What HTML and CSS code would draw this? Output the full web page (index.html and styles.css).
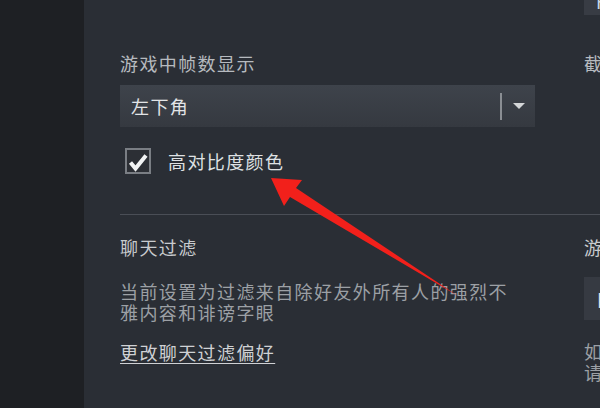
FILE: index.html
```html
<!DOCTYPE html>
<html lang="zh-CN">
<head>
  <meta charset="UTF-8">
  <title>游戏中设置</title>
  <link rel="stylesheet" href="styles.css">
</head>
<body>
  <div class="window">
    <aside class="sidebar"></aside>

    <main class="panel">
      <!-- 上半部分 -->
      <div class="row">
        <div class="col col-left">
          <div class="label">游戏中帧数显示</div>
          <div class="select">
            <span class="select-value">左下角</span>
            <span class="select-sep"></span>
            <span class="select-btn"><span class="select-arrow"></span></span>
          </div>
          <div class="check">
            <span class="check-box">
              <svg width="26" height="26" viewBox="0 0 26 26">
                <rect x="1" y="1" width="24" height="24" fill="#2c2f35" stroke="#7a7e84" stroke-width="2"/>
                <path d="M5.5 14.5 L10.5 20.5 L21 7.5" fill="none" stroke="#f2f3f4" stroke-width="4" stroke-linejoin="miter"/>
              </svg>
            </span>
            <span class="check-text">高对比度颜色</span>
          </div>
        </div>
        <div class="col col-right">
          <div class="stub"><span class="stub-text">F12</span></div>
          <div class="label label-top">截图快捷键</div>
        </div>
      </div>

      <div class="divider"></div>

      <!-- 下半部分 -->
      <div class="row">
        <div class="col col-left col-bottom">
          <div class="label label-bright">聊天过滤</div>
          <p class="desc">当前设置为过滤来自除好友外所有人的强烈不雅内容和诽谤字眼</p>
          <a class="link" href="#">更改聊天过滤偏好</a>
        </div>
        <div class="col col-right col-bottom">
          <div class="label label-bright">游戏内服务器浏览器：每分钟最大 Ping 数</div>
          <div class="input-box">自动（5000）</div>
          <p class="desc desc-right">如果您在浏览服务器时遇到连接问题，<br>请尝试降低此数值。</p>
        </div>
      </div>
    </main>
  </div>

  <!-- 标注箭头 -->
  <svg class="annotation" width="600" height="408" viewBox="0 0 600 408">
    <polygon points="271,178 302,180 296,188 458,296 290,197 284,206" fill="#f2201b"/>
  </svg>
</body>
</html>
```

FILE: styles.css
```css
body {
  margin: 0;
  width: 600px;
  height: 408px;
  overflow: hidden;
  font-family: "Noto Sans CJK SC", sans-serif;
  font-size: 18px;
  letter-spacing: 1.4px;
  line-height: 21px;
  position: relative;
}

.window {
  display: flex;
  height: 408px;
}

.sidebar {
  width: 84px;
  flex-shrink: 0;
  background: #1e2024;
}

.panel {
  flex: 1;
  background: #2a2e35;
  padding-left: 36px;
  overflow: hidden;
}

.row {
  display: flex;
  gap: 49px;
  align-items: flex-start;
}

.col-left {
  width: 415px;
  flex-shrink: 0;
  padding-top: 53px;
  padding-bottom: 40px;
}

.col-right {
  width: 320px;
  flex-shrink: 0;
  white-space: nowrap;
}

.col-bottom {
  padding-top: 22px;
  padding-bottom: 0;
}

.label {
  color: #b6babf;
}

.label-bright {
  color: #c8cbce;
}

.label-top {
  margin-top: 38px;
}

.stub {
  height: 15px;
  background: #383c44;
  padding-left: 12px;
  overflow: hidden;
}

.stub-text {
  display: block;
  margin-top: -9px;
  color: #c9d6e6;
}

.select {
  margin-top: 11px;
  height: 42px;
  display: flex;
  align-items: center;
  background: linear-gradient(#3e434b, #353940);
}

.select-value {
  flex: 1;
  padding-left: 11px;
  color: #e2e4e6;
}

.select-sep {
  width: 2px;
  height: 27px;
  background: #8a8e93;
}

.select-btn {
  width: 33px;
  display: flex;
  justify-content: center;
}

.select-arrow {
  width: 0;
  height: 0;
  border-left: 6.5px solid transparent;
  border-right: 6.5px solid transparent;
  border-top: 6px solid #d4d6d8;
}

.check {
  margin-top: 21px;
  display: flex;
  align-items: center;
  gap: 17px;
  padding-left: 5px;
}

.check-box {
  width: 26px;
  height: 26px;
  display: block;
}

.check-box svg {
  display: block;
}

.check-text {
  color: #dfe1e3;
}

.divider {
  height: 1px;
  background: #4a4e56;
}

.desc {
  margin: 23px 0 0;
  max-width: 395px;
  color: #9ca0a5;
}

.link {
  display: inline-block;
  margin-top: 19px;
  color: #cfd1d4;
  text-decoration: underline;
  text-underline-offset: 3px;
}

.input-box {
  margin-top: 19px;
  height: 43px;
  line-height: 43px;
  padding-left: 12px;
  background: #363a42;
  color: #e2e4e6;
}

.desc-right {
  margin-top: 21px;
  max-width: none;
}

.annotation {
  position: absolute;
  top: 0;
  left: 0;
  pointer-events: none;
}
```
